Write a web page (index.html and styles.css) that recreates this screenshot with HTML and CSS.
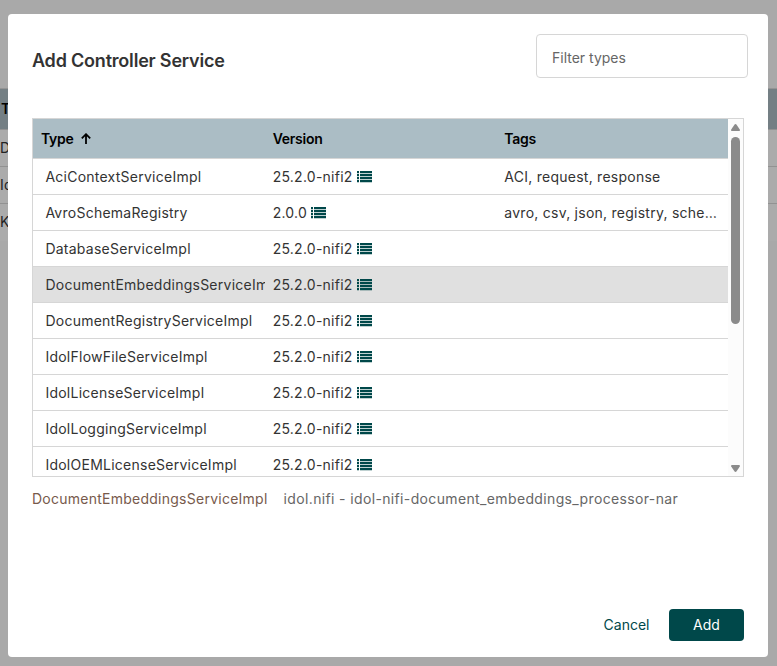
FILE: index.html
```html
<!DOCTYPE html>
<html lang="en">
<head>
<meta charset="utf-8">
<title>Add Controller Service</title>
<link rel="stylesheet" href="styles.css">
</head>
<body>
<svg class="defs" aria-hidden="true"><symbol id="list" viewBox="0 0 15 12"><path d="M0 0h2v2.300H0zM3 0h12v2.300H3zM0 3h2v2.300H0zM3 3h12v2.300H3zM0 6h2v2.300H0zM3 6h12v2.300H3zM0 9h2v2.300H0zM3 9h12v2.300H3z"/></symbol></svg>
<main class="page">
  <div class="back-head">T</div>
  <div class="back-row">D</div>
  <div class="back-row">Id</div>
  <div class="back-row last">K</div>
</main>
<div class="dialog">
  <header class="dialog-head">
    <h1 class="title">Add Controller Service</h1>
    <input class="filter" type="text" placeholder="Filter types">
  </header>
  <div class="listing">
    <div class="table">
      <div class="row head"><div class="cell">Type <svg class="arrow" viewBox="0 0 10 11"><path d="M5 11V1.500M.8 5.300 5 1.200l4.200 4.100"/></svg></div><div class="cell">Version</div><div class="cell">Tags</div></div>
      <div class="row"><div class="cell type">AciContextServiceImpl</div><div class="cell">25.2.0-nifi2<svg class="list"><use href="#list"/></svg></div><div class="cell tags">ACI, request, response</div></div>
      <div class="row"><div class="cell type">AvroSchemaRegistry</div><div class="cell">2.0.0<svg class="list"><use href="#list"/></svg></div><div class="cell tags">avro, csv, json, registry, schema, service</div></div>
      <div class="row"><div class="cell type">DatabaseServiceImpl</div><div class="cell">25.2.0-nifi2<svg class="list"><use href="#list"/></svg></div><div class="cell tags"></div></div>
      <div class="row selected"><div class="cell type">DocumentEmbeddingsServiceImpl</div><div class="cell">25.2.0-nifi2<svg class="list"><use href="#list"/></svg></div><div class="cell tags"></div></div>
      <div class="row"><div class="cell type">DocumentRegistryServiceImpl</div><div class="cell">25.2.0-nifi2<svg class="list"><use href="#list"/></svg></div><div class="cell tags"></div></div>
      <div class="row"><div class="cell type">IdolFlowFileServiceImpl</div><div class="cell">25.2.0-nifi2<svg class="list"><use href="#list"/></svg></div><div class="cell tags"></div></div>
      <div class="row"><div class="cell type">IdolLicenseServiceImpl</div><div class="cell">25.2.0-nifi2<svg class="list"><use href="#list"/></svg></div><div class="cell tags"></div></div>
      <div class="row"><div class="cell type">IdolLoggingServiceImpl</div><div class="cell">25.2.0-nifi2<svg class="list"><use href="#list"/></svg></div><div class="cell tags"></div></div>
      <div class="row"><div class="cell type">IdolOEMLicenseServiceImpl</div><div class="cell">25.2.0-nifi2<svg class="list"><use href="#list"/></svg></div><div class="cell tags"></div></div>
    </div>
    <div class="scrollbar">
      <svg class="tri" viewBox="0 0 9 7"><path d="M4.500 0Q5.100 0 5.600.700L8.800 5.500Q9.200 7 8 7H1Q-.2 7 .2 5.500L3.400.700Q3.900 0 4.500 0z"/></svg>
      <div class="thumb"></div>
      <svg class="tri down" viewBox="0 0 9 7"><path d="M4.500 0Q5.100 0 5.600.700L8.800 5.500Q9.200 7 8 7H1Q-.2 7 .2 5.500L3.400.700Q3.900 0 4.500 0z"/></svg>
    </div>
  </div>
  <div class="detail"><span class="detail-name">DocumentEmbeddingsServiceImpl</span><span class="detail-bundle">idol.nifi - idol-nifi-document_embeddings_processor-nar</span></div>
  <footer class="actions"><button class="btn">Cancel</button><button class="btn primary">Add</button></footer>
</div>
</body>
</html>
```

FILE: styles.css
```css
* { box-sizing: border-box; }
body {
  margin: 0;
  height: 666px;
  overflow: hidden;
  background: #a9a9a9;
  font-family: Inter, sans-serif;
  font-size: 14px;
  letter-spacing: 0.25px;
  color: #333;
}
.defs { position: absolute; width: 0; height: 0; }
.page { padding-top: 88px; }
.back-head {
  height: 42px;
  padding-left: 1px;
  line-height: 40px;
  background: #747f84;
  border-top: 1px solid #949494;
  border-bottom: 1px solid #929292;
  color: #000;
  font-weight: 600;
}
.back-row {
  height: 37px;
  line-height: 36px;
  background: #ababab;
  border-bottom: 1px solid #929292;
  color: #222;
}
.back-row.last { border-bottom: 0; }
.dialog {
  position: absolute;
  left: 8px;
  top: 14px;
  width: 760px;
  height: 643px;
  padding: 20px 24px 16px;
  display: flex;
  flex-direction: column;
  background: #fff;
  border-radius: 4px;
}
.dialog-head {
  display: flex;
  justify-content: space-between;
  height: 84px;
  margin-right: -4px;
}
.title {
  margin: 14px 0 0;
  font-size: 18px;
  line-height: 26px;
  font-weight: 570;
  letter-spacing: -0.2px;
}
.filter {
  width: 212px;
  height: 44px;
  padding: 3px 15px 0;
  border: 1px solid #d6d6d6;
  border-radius: 4px;
  font: inherit;
  letter-spacing: 0;
}
.filter::placeholder { color: #666; opacity: 1; }
.listing {
  display: flex;
  height: 359px;
  border: 1px solid #d6d6d6;
  overflow: hidden;
}
.table { flex: 1; min-width: 0; }
.row {
  display: grid;
  grid-template-columns: repeat(3, minmax(0, 1fr));
  height: 36px;
  line-height: 36px;
  border-bottom: 1px solid #d6d6d6;
}
.row.head {
  height: 40px;
  line-height: 40px;
  background: #abbdc5;
  color: #000;
  font-weight: 600;
  letter-spacing: -0.25px;
}
.row.selected { background: #e0e0e0; }
.cell { padding-left: 8px; white-space: nowrap; overflow: hidden; }
.type { padding-left: 12.4px; }
.tags { text-overflow: ellipsis; padding-right: 8px; }
.arrow {
  width: 10px;
  height: 11px;
  margin-left: 4px;
  fill: none;
  stroke: #000;
  stroke-width: 1.8;
}
.list {
  width: 15px;
  height: 12px;
  margin-left: 4px;
  vertical-align: -1px;
  fill: #00484a;
}
.scrollbar {
  width: 15px;
  padding: 5px 0 4px;
  display: flex;
  flex-direction: column;
  align-items: center;
  background: #fcfcfc;
}
.tri { width: 9px; height: 7px; fill: #8b8b8b; }
.tri.down { margin-top: auto; transform: rotate(180deg); }
.thumb {
  width: 9px;
  height: 187px;
  margin-top: 6px;
  border-radius: 5px;
  background: #8b8b8b;
}
.detail {
  display: flex;
  gap: 16px;
  margin-top: 12px;
  line-height: 20px;
  color: #666;
  white-space: nowrap;
}
.detail-name { color: #775a4c; }
.detail-bundle { letter-spacing: 0.36px; }
.actions {
  display: flex;
  justify-content: flex-end;
  gap: 4px;
  margin-top: auto;
}
.btn {
  height: 32px;
  padding: 0 15.5px 1px;
  border: 0;
  border-radius: 4px;
  background: none;
  color: #00484a;
  font: inherit;
  letter-spacing: 0;
}
.btn.primary { width: 75px; background: #00484a; color: #fff; }
```
